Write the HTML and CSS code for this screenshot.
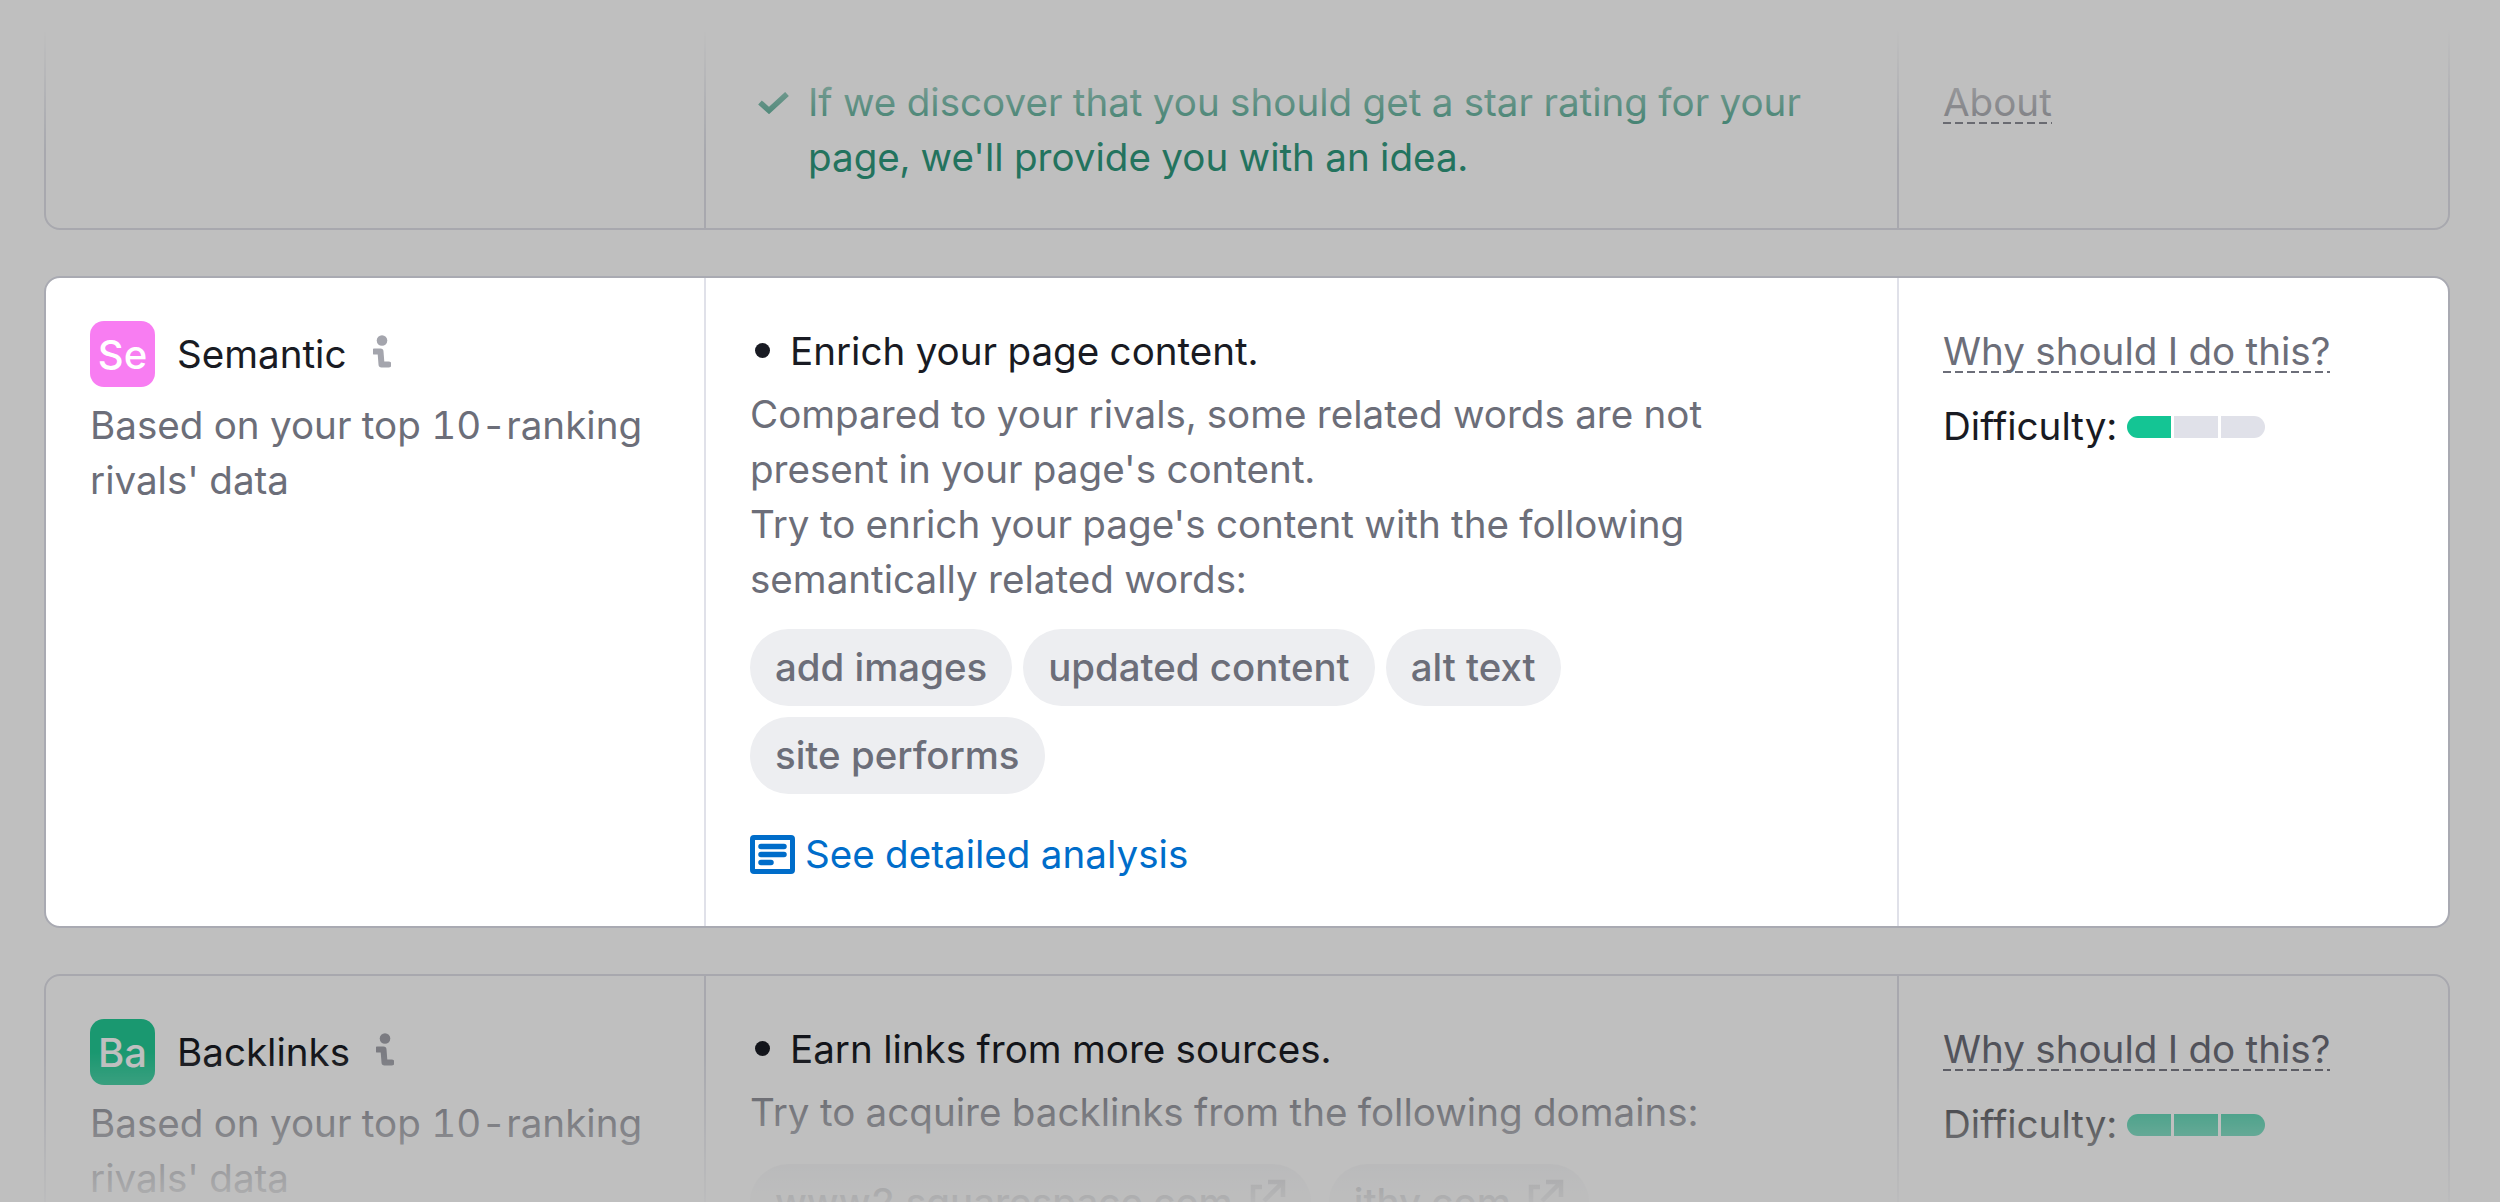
FILE: index.html
```html
<!DOCTYPE html>
<html lang="en">
<head>
<meta charset="utf-8">
<title>On Page SEO Checker ideas</title>
<link rel="stylesheet" href="styles.css">
</head>
<body>
<main class="page">
  <section class="card card-top">
    <div class="cell"></div>
    <div class="cell cell-main">
      <div class="check-row">
        <svg class="check" viewBox="0 0 31 22" aria-hidden="true"><path d="M2 10.5 11 18.5 29 2" fill="none" stroke="currentColor" stroke-width="5.5"/></svg>
        <p class="check-text">If we discover that you should get a star rating for your page, we'll provide you with an idea.</p>
      </div>
    </div>
    <div class="cell cell-side">
      <a class="why why-dim">About</a>
    </div>
  </section>

  <section class="card card-focus">
    <div class="cell cell-type">
      <div class="type-row">
        <span class="badge badge-se">Se</span>
        <span class="type-name">Semantic</span>
        <svg class="info" viewBox="0 0 18 33" aria-hidden="true"><circle cx="9" cy="5.5" r="5.3" fill="currentColor"/><path d="M1.5 16.5H7.5L8.5 29.5H15.5" fill="none" stroke="currentColor" stroke-width="6" stroke-linecap="round" stroke-linejoin="round"/></svg>
      </div>
      <p class="type-note">Based on your top 10-ranking rivals' data</p>
    </div>
    <div class="cell cell-main">
      <h3 class="idea"><span class="dot"></span>Enrich your page content.</h3>
      <p class="idea-body">Compared to your rivals, some related words are not present in your page's content.<br>Try to enrich your page's content with the following semantically related words:</p>
      <div class="chips">
        <span class="chip">add images</span>
        <span class="chip">updated content</span>
        <span class="chip">alt text</span>
        <span class="chip">site performs</span>
      </div>
      <a class="analysis">
        <svg class="doc" viewBox="0 0 45 39" aria-hidden="true"><rect x="2.5" y="2.5" width="40" height="34" rx="1.5" fill="none" stroke="currentColor" stroke-width="5"/><path d="M11 11.5H34M11 19.5H34M11 27.5H21" fill="none" stroke="currentColor" stroke-width="5.5" stroke-linecap="round"/></svg>
        See detailed analysis
      </a>
    </div>
    <div class="cell cell-side">
      <a class="why">Why should I do this?</a>
      <div class="difficulty">Difficulty:
        <span class="meter"><i class="seg seg-on"></i><i class="seg"></i><i class="seg"></i></span>
      </div>
    </div>
  </section>

  <section class="card card-bottom">
    <div class="cell cell-type">
      <div class="type-row">
        <span class="badge badge-ba">Ba</span>
        <span class="type-name">Backlinks</span>
        <svg class="info" viewBox="0 0 18 33" aria-hidden="true"><circle cx="9" cy="5.5" r="5.3" fill="currentColor"/><path d="M1.5 16.5H7.5L8.5 29.5H15.5" fill="none" stroke="currentColor" stroke-width="6" stroke-linecap="round" stroke-linejoin="round"/></svg>
      </div>
      <p class="type-note">Based on your top 10-ranking rivals' data</p>
    </div>
    <div class="cell cell-main">
      <h3 class="idea"><span class="dot"></span>Earn links from more sources.</h3>
      <p class="idea-body">Try to acquire backlinks from the following domains:</p>
      <div class="chips chips-wide">
        <span class="chip">www2.squarespace.com <svg class="ext" viewBox="0 0 38 38" aria-hidden="true"><path d="M14 8H5V33H30V24M20 3H35V18M35 3 16 22" fill="none" stroke="currentColor" stroke-width="4.5"/></svg></span>
        <span class="chip">ithy.com <svg class="ext" viewBox="0 0 38 38" aria-hidden="true"><path d="M14 8H5V33H30V24M20 3H35V18M35 3 16 22" fill="none" stroke="currentColor" stroke-width="4.5"/></svg></span>
      </div>
    </div>
    <div class="cell cell-side">
      <a class="why">Why should I do this?</a>
      <div class="difficulty">Difficulty:
        <span class="meter"><i class="seg seg-on"></i><i class="seg seg-on"></i><i class="seg seg-on"></i></span>
      </div>
    </div>
  </section>
</main>
<div class="fade fade-top"></div>
<div class="fade fade-bottom"></div>
<div class="scrim"></div>
</body>
</html>
```

FILE: styles.css
```css
* { box-sizing: border-box; }
html, body { margin: 0; height: 100%; }
body {
  position: relative;
  height: 1202px;
  overflow: hidden;
  background: #fff;
  color: #191b23;
  font: 38.6px/55px Inter, "Liberation Sans", sans-serif;
  font-variant-numeric: tabular-nums;
}
p, h3 { margin: 0; font: inherit; }
.page {
  display: flex;
  flex-direction: column;
  gap: 46px;
  padding: 0 50px 0 44px;
}
.card {
  display: grid;
  grid-template-columns: 658px 1193px 1fr;
  flex: none;
  border: 2px solid #e0e1e9;
  border-radius: 16px;
  background: #fff;
}
.card-top { height: 230px; }
.card-focus {
  position: relative;
  z-index: 3;
  height: 652px;
  border-color: #a9aab2;
}
.card-bottom { height: 500px; }
.cell { padding: 46px 44px 0; border-left: 2px solid #e0e1e9; }
.cell:first-child { border-left: 0; }
.card-top .cell { padding-top: 73px; }
.cell-type { padding-top: 43px; }
.cell-side { padding-top: 46px; }

.check-row { display: flex; gap: 19px; padding-left: 8px; }
.check { flex: none; width: 31px; height: 22px; margin-top: 17px; color: #2f9a7e; }
.check-text { color: #2f9a7e; }

.why {
  display: inline-block;
  color: #6c6e79;
  line-height: 44px;
  background: repeating-linear-gradient(90deg, #6c6e79 0 8px, transparent 8px 12px) left bottom / 100% 2px no-repeat;
}
.why-dim { color: #8f9199; }
.difficulty { display: flex; align-items: center; gap: 10px; margin-top: 20px; }
.meter { display: inline-flex; gap: 3px; }
.seg { width: 44px; height: 22px; background: #e0e1e9; }
.seg:first-child { border-radius: 11px 0 0 11px; }
.seg:last-child { border-radius: 0 11px 11px 0; }
.seg-on { background: #14c594; }

.type-row { display: flex; align-items: center; height: 66px; }
.badge {
  flex: none;
  display: flex;
  align-items: center;
  justify-content: center;
  width: 65px;
  height: 66px;
  margin-right: 22px;
  border-radius: 14px;
  color: #fff;
  font-size: 40px;
  font-weight: 500;
}
.badge-se { background: #f87df2; }
.badge-ba { background: #23cb96; }
.info { flex: none; width: 18px; height: 33px; margin: -6px 0 0 26px; color: #a4a5ad; }
.type-note { color: #6c6e79; margin-top: 11px; max-width: 570px; }

.idea { display: flex; align-items: center; }
.dot { flex: none; width: 15px; height: 15px; margin: -2px 20px 0 5px; border-radius: 50%; background: #191b23; }
.idea-body { color: #6c6e79; margin-top: 8px; max-width: 1080px; }

.chips { display: flex; flex-wrap: wrap; gap: 11px; margin-top: 22px; }
.chips-wide { gap: 18px; margin-top: 24px; }
.chip {
  display: inline-flex;
  align-items: center;
  gap: 15px;
  height: 77px;
  padding: 0 25px;
  border-radius: 39px;
  background: #edeef1;
  color: #6c6e79;
  font-size: 38.4px;
  font-weight: 500;
}
.ext { width: 38px; height: 38px; color: #a4a5ad; margin-top: -10px; }
.analysis { display: flex; align-items: center; gap: 10px; margin-top: 33px; color: #006dca; }
.doc { flex: none; width: 45px; height: 39px; }

.fade { position: absolute; left: 0; right: 0; z-index: 1; pointer-events: none; }
.fade-top { top: 0; height: 150px; background: linear-gradient(#fff 30px, rgba(255,255,255,0) 150px); }
.fade-bottom { bottom: 0; height: 150px; background: linear-gradient(rgba(255,255,255,0), rgba(255,255,255,.88)); }
.scrim { position: absolute; inset: 0; z-index: 2; background: rgba(0,0,0,.25); pointer-events: none; }
```
